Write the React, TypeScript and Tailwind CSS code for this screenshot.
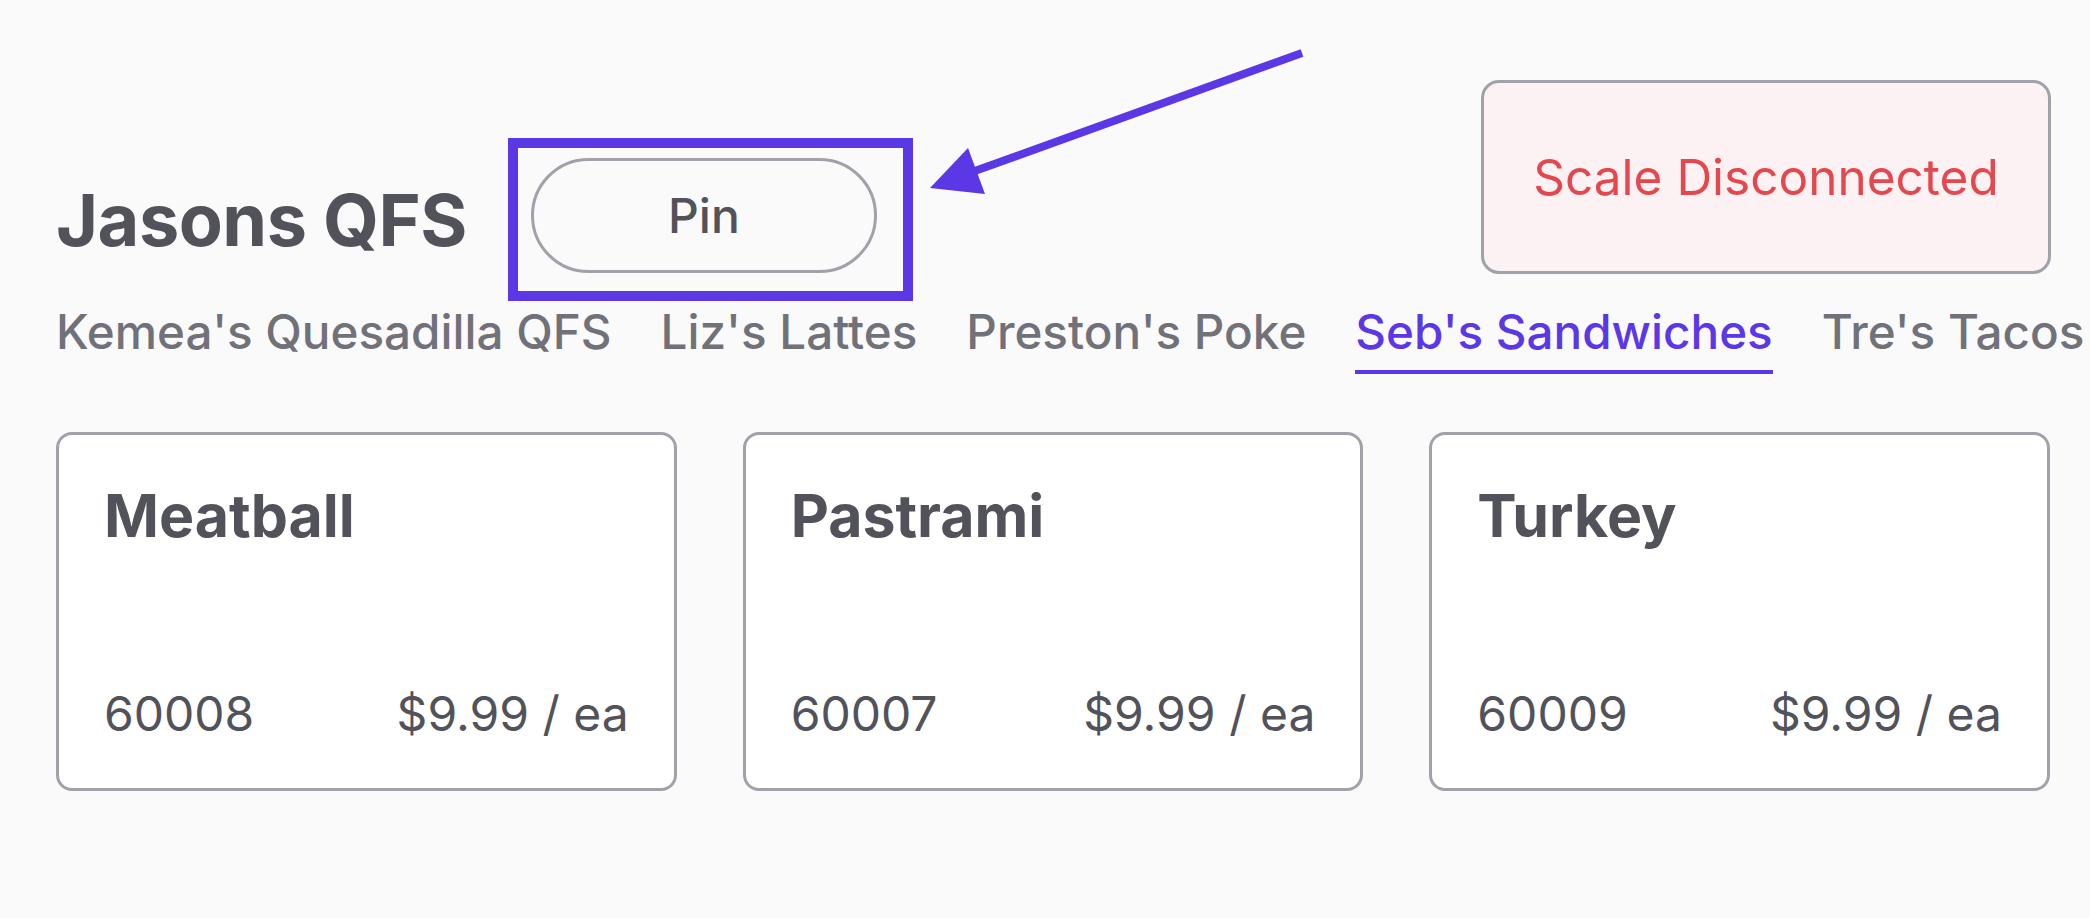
import React from "react";

const tabs = [
  { name: "Kemea's Quesadilla QFS", active: false },
  { name: "Liz's Lattes", active: false },
  { name: "Preston's Poke", active: false },
  { name: "Seb's Sandwiches", active: true },
  { name: "Tre's Tacos", active: false },
];

const items = [
  { name: "Meatball", code: "60008", price: "$9.99 / ea" },
  { name: "Pastrami", code: "60007", price: "$9.99 / ea" },
  { name: "Turkey", code: "60009", price: "$9.99 / ea" },
];

export default function App() {
  return (
    <div
      className="relative min-h-screen w-full overflow-hidden bg-[#fafafa] text-[#52525b]"
      style={{ fontFamily: "Inter, 'Noto Sans', sans-serif" }}
    >
      <div className="pl-[56px] pr-[39px] pt-[80px]">
        <div className="flex items-start justify-between">
          <div className="mt-[58px] flex items-center gap-[41px]">
            <h1 className="text-[72px] font-bold leading-none tracking-[-0.5px] text-[#52525b]">
              Jasons QFS
            </h1>
            <div className="border-[10px] border-[#5b37e6] pb-[18px] pl-[13px] pr-[26px] pt-[10px]">
              <button className="flex h-[115px] w-[346px] items-center justify-center rounded-full border-[3px] border-[#a1a1aa] bg-[#fafafa] text-[48px] font-medium text-[#52525b]">
                Pin
              </button>
            </div>
          </div>
          <div className="flex h-[194px] w-[570px] items-center justify-center rounded-[18px] border-[3px] border-[#a1a1aa] bg-[#fdf2f3] text-[49.5px] text-[#e5474f]">
            Scale Disconnected
          </div>
        </div>

        <div className="mt-[2px] flex gap-[49px] whitespace-nowrap">
          {tabs.map((t) => (
            <div
              key={t.name}
              className={
                t.active
                  ? "border-b-[4px] border-[#5b37e6] pb-[9px] text-[47.6px] font-medium leading-[58px] text-[#5b37e6]"
                  : "border-b-[4px] border-transparent pb-[9px] text-[47.6px] font-medium leading-[58px] text-[#71717a]"
              }
            >
              {t.name}
            </div>
          ))}
        </div>

        <div className="mt-[58px] grid w-[1994px] grid-cols-3 gap-[66px]">
          {items.map((it) => (
            <div
              key={it.name}
              className="flex h-[359px] flex-col justify-between rounded-[16px] border-[3px] border-[#a1a1aa] bg-white px-[45px] pb-[38px] pt-[45px]"
            >
              <div className="text-[59px] font-bold leading-[72px] text-[#52525b]">
                {it.name}
              </div>
              <div className="flex items-center justify-between text-[48px] leading-[72px] text-[#52525b]">
                <span>{it.code}</span>
                <span>{it.price}</span>
              </div>
            </div>
          ))}
        </div>
      </div>

      <svg
        className="pointer-events-none absolute left-0 top-0"
        width="2090"
        height="918"
        viewBox="0 0 2090 918"
      >
        <line x1="972" y1="172" x2="1302" y2="53" stroke="#5b37e6" strokeWidth="8" />
        <polygon points="930,188 968,148 985,194" fill="#5b37e6" />
      </svg>
    </div>
  );
}
